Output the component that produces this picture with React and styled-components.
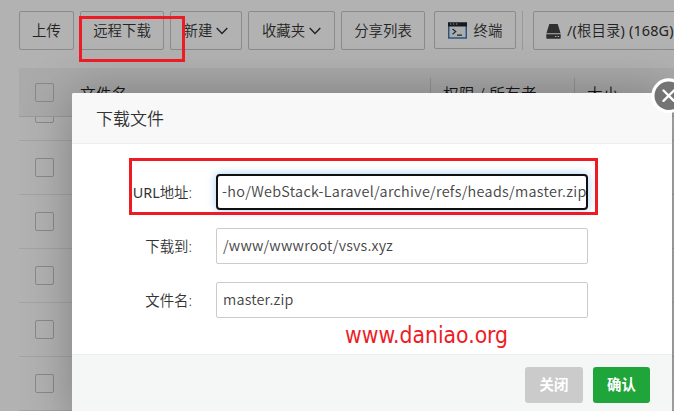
import React from "react";
import styled, { createGlobalStyle } from "styled-components";

const GlobalStyle = createGlobalStyle`
  * { box-sizing: border-box; }
  html, body { margin: 0; height: 100%; overflow: hidden; background: #fff; }
  body, input, button { font-family: "Noto Sans", "Noto Sans CJK SC", sans-serif; font-weight: 350; color: #333; }
`;

const Page = styled.div`
  position: relative;
  width: 674px;
  height: 411px;
  overflow: hidden;
`;

const Toolbar = styled.div`
  display: flex;
  align-items: flex-start;
  gap: 6px;
  height: 68px;
  padding: 11px 0 0 19px;
`;

const ToolButton = styled.button`
  display: flex;
  flex: none;
  align-items: center;
  justify-content: ${(p) => (p.$start ? "flex-start" : "center")};
  gap: ${(p) => p.$gap || 4}px;
  width: ${(p) => p.$width}px;
  height: ${(p) => p.$height || 39}px;
  margin-left: ${(p) => p.$offset || 0}px;
  padding: 1px 0 0 ${(p) => (p.$start ? 12 : 0)}px;
  border: 1px solid #c8c8c8;
  border-radius: 2px;
  background: transparent;
  color: #333;
  font-size: 14.4px;
  letter-spacing: ${(p) => (p.$start ? 0.15 : 0)}px;
  line-height: 20px;
  white-space: nowrap;
`;

const Latin = styled.span`
  font-weight: 400;
`;

const Divider = styled.div`
  flex: none;
  width: 1px;
  height: 39px;
  background: #dcdcdc;
`;

const Table = styled.div`
  margin-left: 19px;
`;

const TableHead = styled.div`
  position: relative;
  z-index: 1;
  display: grid;
  grid-template-columns: 61px 350px 144px 1fr;
  height: 49px;
  border-bottom: 1px solid #ddd;
  background: #f4f4f4;
`;

const HeadCell = styled.div`
  display: flex;
  align-items: center;
  height: 48px;
  padding-left: ${(p) => p.$pad || 0}px;
  padding-top: ${(p) => (p.$box ? 0 : 4)}px;
  font-size: 15.6px;
  letter-spacing: 0.3px;
  line-height: 20px;
  color: #222;
  background: ${(p) => (p.$ruled ? "linear-gradient(#d5d5d5, #d5d5d5) 0 10px / 1px 28px no-repeat" : "none")};
`;

const Rows = styled.div`
  margin-top: -30px;
`;

const Row = styled.div`
  display: flex;
  align-items: center;
  height: 54px;
  padding-left: 16px;
  border-bottom: 1px solid #eaeaea;
`;

const Checkbox = styled.span`
  width: 19px;
  height: 19px;
  border: 1px solid #c4c4c4;
  border-radius: 2px;
`;

const Shade = styled.div`
  position: absolute;
  z-index: 2;
  inset: 0;
  background: rgba(0, 0, 0, 0.3);
`;

const Dialog = styled.section`
  position: absolute;
  z-index: 3;
  left: 72px;
  top: 93px;
  width: 600px;
  height: 332px;
  border-radius: 2px;
  background: #fff;
  box-shadow: 1px 1px 50px rgba(0, 0, 0, 0.3);
`;

const DialogTitle = styled.header`
  height: 51px;
  padding: 0 24px;
  border-bottom: 1px solid #eee;
  border-radius: 2px 2px 0 0;
  background: #f8f8f8;
  color: #333;
  font-size: 17px;
  line-height: 52px;
`;

const Form = styled.div`
  display: flex;
  flex-direction: column;
  gap: 18px;
  height: 210px;
  padding-top: 30px;
`;

const Field = styled.label`
  display: flex;
  align-items: center;
  height: 36px;
`;

const FieldLabel = styled.span`
  width: 120px;
  margin-right: 24px;
  padding-top: 2px;
  color: #333;
  font-size: 14.4px;
  line-height: 20px;
  text-align: right;
  white-space: nowrap;
`;

const Input = styled.input`
  width: 372px;
  height: 36px;
  padding: ${(p) => (p.$active ? "0 0 3px 4px" : "0 5px 3px 6px")};
  border: ${(p) => (p.$active ? "2px solid #101010" : "1px solid #ccc")};
  border-radius: ${(p) => (p.$active ? 4 : 2)}px;
  outline: none;
  background: #fff;
  color: #444;
  font-family: "Noto Sans CJK SC", sans-serif;
  font-size: 14.4px;
  letter-spacing: ${(p) => p.$track || 0}px;
  box-shadow: ${(p) => (p.$active ? "0 0 10px rgba(102, 175, 233, 0.6)" : "none")};
`;

const DialogFooter = styled.footer`
  display: flex;
  justify-content: flex-end;
  gap: 10px;
  height: 71px;
  padding: 12px 22px 0 0;
  border-top: 1px solid #edefef;
  background: #f5f7f6;
`;

const ActionButton = styled.button`
  width: ${(p) => (p.$primary ? 57 : 58)}px;
  height: 36px;
  padding: 0 0 3px;
  border: 0;
  border-radius: 3px;
  background: ${(p) => (p.$primary ? "#20a53a" : "#cbcbcb")};
  color: #fff;
  font-size: 14.4px;
  font-weight: 700;
`;

const CloseButton = styled.button`
  position: absolute;
  left: 579px;
  top: -15px;
  width: 36px;
  height: 36px;
  padding: 0;
  border: 0;
  background: none;
`;

const Marker = styled.div`
  position: absolute;
  z-index: 4;
  left: ${(p) => p.$x}px;
  top: ${(p) => p.$y}px;
  width: ${(p) => p.$w}px;
  height: ${(p) => p.$h}px;
  border: 3px solid #ed1c24;
`;

const Watermark = styled.div`
  position: absolute;
  z-index: 4;
  left: 345px;
  top: 321px;
  color: #ed1c24;
  font-family: "DejaVu Sans Condensed", "DejaVu Sans", sans-serif;
  font-stretch: condensed;
  font-weight: 400;
  font-size: 22.7px;
  line-height: 28px;
`;

const Chevron = () => (
  <svg width="12" height="8" viewBox="0 0 12 8" fill="none" stroke="#333" strokeWidth="1.4">
    <path d="M0.7 1 6 6.5 11.3 1" />
  </svg>
);

const TerminalIcon = () => (
  <svg width="19" height="17" viewBox="0 0 19 17">
    <rect x="0.75" y="1" width="17.5" height="15" fill="#f4f8fb" stroke="#3b7cb8" strokeWidth="1.5" />
    <path d="M0 0.5h19v4H0z" fill="#252525" />
    <path d="M2 2h1.3M5 2h1.3M8 2h1.3" stroke="#ddd" strokeWidth="1" />
    <path d="m4.5 7 3.2 2.6-3.2 2.6M9 13.1h5" fill="none" stroke="#333" strokeWidth="1.2" />
  </svg>
);

const DiskIcon = () => (
  <svg width="15" height="15" viewBox="0 0 15 15" fill="#444">
    <path d="M3.3 0h8.4L14.6 9.3H.4z" />
    <path fillRule="evenodd" d="M.3 10.3h14.4V14a.8.8 0 0 1-.8.8H1.1a.8.8 0 0 1-.8-.8zM9 12v1h1.4v-1zm2.6 0v1H13v-1z" />
  </svg>
);

const CloseIcon = () => (
  <svg width="36" height="36" viewBox="0 0 36 36">
    <circle cx="17.7" cy="17.7" r="15.8" fill="#747474" stroke="#fff" strokeWidth="3.2" />
    <path d="m12.5 12.5 10.4 10.4M22.9 12.5 12.5 22.9" stroke="#fff" strokeWidth="2.3" strokeLinecap="round" />
  </svg>
);

export default function App() {
  return (
    <Page>
      <GlobalStyle />
      <Toolbar>
        <ToolButton $width={55}>上传</ToolButton>
        <ToolButton $width={84}>远程下载</ToolButton>
        <ToolButton $width={72}>新建<Chevron /></ToolButton>
        <ToolButton $width={87}>收藏夹<Chevron /></ToolButton>
        <ToolButton $width={84}>分享列表</ToolButton>
        <ToolButton $width={82} $height={38} $gap={7} $offset={3}><TerminalIcon />终端</ToolButton>
        <Divider />
        <ToolButton $width={160} $gap={6} $offset={4} $start>
          <DiskIcon />
          <span><Latin>/(</Latin>根目录<Latin>) (168G)</Latin></span>
        </ToolButton>
      </Toolbar>
      <Table>
        <TableHead>
          <HeadCell $pad={16} $box><Checkbox /></HeadCell>
          <HeadCell>文件名</HeadCell>
          <HeadCell $pad={13} $ruled>权限 / 所有者</HeadCell>
          <HeadCell $pad={13} $ruled>大小</HeadCell>
        </TableHead>
        <Rows>
          {[0, 1, 2, 3, 4, 5].map((row) => (
            <Row key={row}><Checkbox /></Row>
          ))}
        </Rows>
      </Table>
      <Shade />
      <Dialog>
        <DialogTitle>下载文件</DialogTitle>
        <Form>
          <Field>
            <FieldLabel><Latin>URL</Latin>地址:</FieldLabel>
            <Input $active $track={0.31} readOnly value="-ho/WebStack-Laravel/archive/refs/heads/master.zip" />
          </Field>
          <Field>
            <FieldLabel>下载到:</FieldLabel>
            <Input $track={0.2} readOnly value="/www/wwwroot/vsvs.xyz" />
          </Field>
          <Field>
            <FieldLabel>文件名:</FieldLabel>
            <Input $track={0.2} readOnly value="master.zip" />
          </Field>
        </Form>
        <DialogFooter>
          <ActionButton>关闭</ActionButton>
          <ActionButton $primary>确认</ActionButton>
        </DialogFooter>
        <CloseButton aria-label="关闭"><CloseIcon /></CloseButton>
      </Dialog>
      <Marker $x={79} $y={16} $w={106} $h={46} />
      <Marker $x={129} $y={158} $w={469} $h={57} />
      <Watermark>www.daniao.org</Watermark>
    </Page>
  );
}
